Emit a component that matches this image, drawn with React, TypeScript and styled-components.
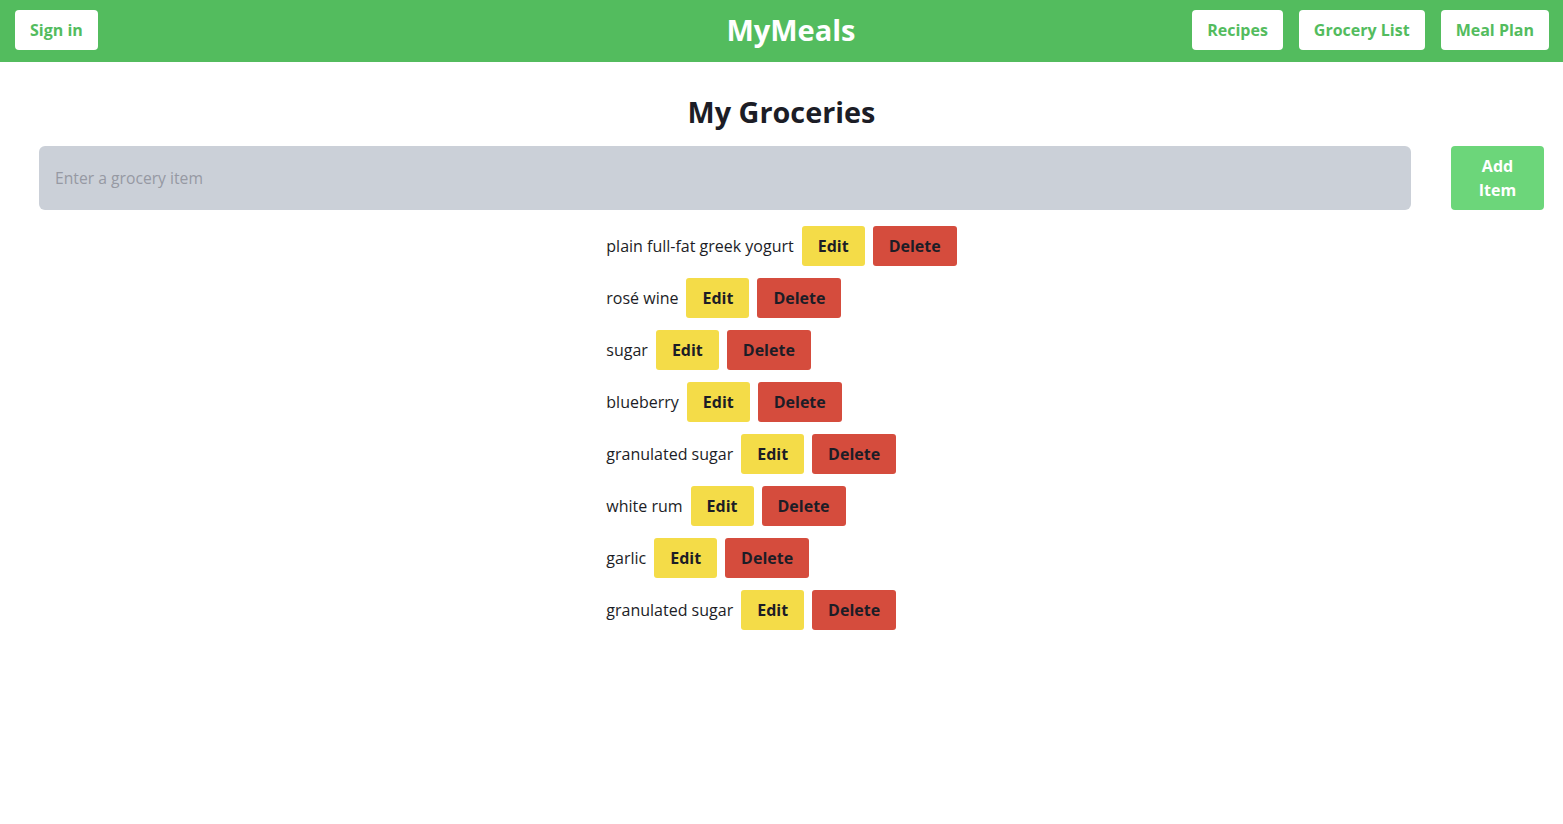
import React from "react";
import styled, { createGlobalStyle } from "styled-components";

const GlobalStyle = createGlobalStyle`
  html, body { margin: 0; padding: 0; background: #ffffff; }
  body { font-family: "Open Sans", "Liberation Sans", sans-serif; color: #1c1d26; }
  * { box-sizing: border-box; }
`;

const Header = styled.header`
  display: grid;
  grid-template-columns: 1fr auto 1fr;
  align-items: center;
  height: 62px;
  padding: 0 14px 2px 15px;
  background: #53bc5e;
`;

const Left = styled.div`
  display: flex;
  justify-content: flex-start;
`;

const Right = styled.nav`
  display: flex;
  justify-content: flex-end;
  gap: 16px;
`;

const Brand = styled.h1`
  margin: 0 0 0 18px;
  font-size: 29px;
  line-height: 40px;
  font-weight: 700;
  color: #ffffff;
`;

const NavButton = styled.button`
  height: 40px;
  padding: 0 15px;
  border: none;
  border-radius: 4px;
  background: #ffffff;
  color: #53bc5e;
  font-family: inherit;
  font-size: 16px;
  font-weight: 700;
  cursor: pointer;
`;

const Main = styled.main`
  display: flex;
  flex-direction: column;
  align-items: center;
  padding-top: 30px;
`;

const Title = styled.h2`
  margin: 0 0 14px;
  font-size: 28.8px;
  line-height: 40px;
  font-weight: 700;
  color: #1c1d26;
`;

const Form = styled.form`
  display: flex;
  align-items: stretch;
  gap: 40px;
  width: 100%;
  padding: 0 19px 0 39px;
`;

const Input = styled.input`
  flex: 1;
  height: 64px;
  padding: 0 16px;
  border: none;
  border-radius: 6px;
  background: #cbd0d8;
  font-family: inherit;
  font-size: 15.7px;
  color: #1c1d26;
  outline: none;
  &::placeholder { color: #9699a3; }
`;

const AddButton = styled.button`
  width: 93px;
  height: 64px;
  padding: 0 24px;
  border: none;
  border-radius: 4px;
  background: #6cd67a;
  color: #ffffff;
  font-family: inherit;
  font-size: 16px;
  font-weight: 700;
  line-height: 24px;
  cursor: pointer;
`;

const List = styled.ul`
  display: flex;
  flex-direction: column;
  align-items: flex-start;
  gap: 12px;
  margin: 16px 0 0;
  padding: 0;
  list-style: none;
`;

const Row = styled.li`
  display: flex;
  align-items: center;
  gap: 8px;
  height: 40px;
  font-size: 16px;
`;

const ActionButton = styled.button<{ $variant: "edit" | "delete" }>`
  height: 40px;
  padding: 0 16px;
  border: none;
  border-radius: 3px;
  background: ${(p) => (p.$variant === "edit" ? "#f4dc48" : "#d54c3d")};
  color: #1c1d26;
  font-family: inherit;
  font-size: 16px;
  font-weight: 700;
  cursor: pointer;
`;

const items = [
  "plain full-fat greek yogurt",
  "rosé wine",
  "sugar",
  "blueberry",
  "granulated sugar",
  "white rum",
  "garlic",
  "granulated sugar",
];

export default function App() {
  return (
    <>
      <GlobalStyle />
      <Header>
        <Left>
          <NavButton>Sign in</NavButton>
        </Left>
        <Brand>MyMeals</Brand>
        <Right>
          <NavButton>Recipes</NavButton>
          <NavButton>Grocery List</NavButton>
          <NavButton>Meal Plan</NavButton>
        </Right>
      </Header>
      <Main>
        <Title>My Groceries</Title>
        <Form onSubmit={(e) => e.preventDefault()}>
          <Input placeholder="Enter a grocery item" />
          <AddButton type="submit">Add Item</AddButton>
        </Form>
        <List>
          {items.map((item, i) => (
            <Row key={i}>
              <span>{item}</span>
              <ActionButton $variant="edit">Edit</ActionButton>
              <ActionButton $variant="delete">Delete</ActionButton>
            </Row>
          ))}
        </List>
      </Main>
    </>
  );
}
